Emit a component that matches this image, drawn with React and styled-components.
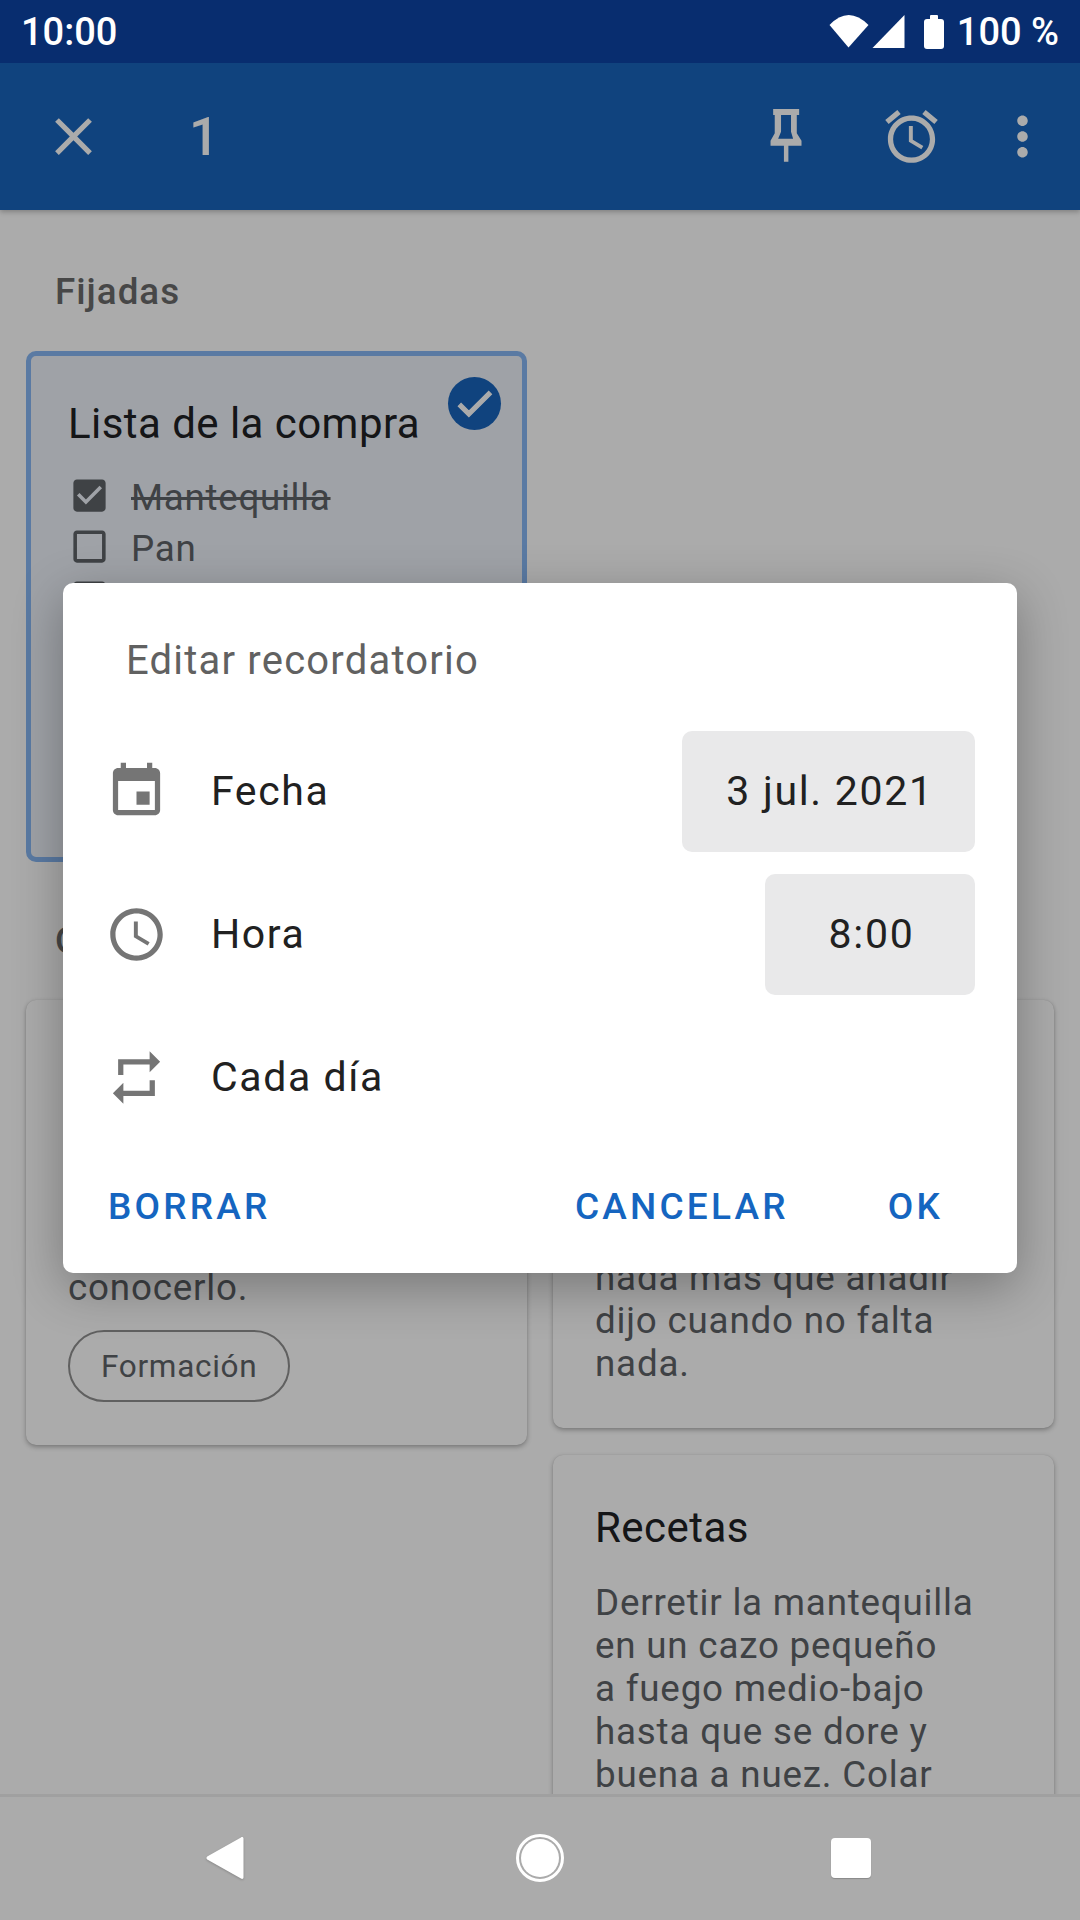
import React from "react";
import styled, { createGlobalStyle } from "styled-components";

const GlobalStyle = createGlobalStyle`
  html, body {
    margin: 0;
    padding: 0;
    background: #fff;
  }
  * {
    box-sizing: border-box;
  }
`;

const ICONS = {
  close:
    "M19 6.41L17.59 5 12 10.59 6.41 5 5 6.41 10.59 12 5 17.59 6.41 19 12 13.41 17.59 19 19 17.59 13.41 12z",
  pin: "M7.3 1.5H17.2V3.8H16.3V10.8L18.1 13.6V15.5H13.1V21.6H11.4V15.5H6.3V13.6L7.9 10.8V3.8H7.3ZM10.3 3.8V10.2L9.2 12.9H14.9L14.1 10.2V3.8Z",
  alarm:
    "M22 5.72l-4.6-3.86-1.29 1.53 4.6 3.86L22 5.72zM7.88 3.39L6.6 1.86 2 5.71l1.29 1.53 4.59-3.85zM12.5 8H11v6l4.75 2.85.75-1.23-4-2.37V8zM12 4c-4.97 0-9 4.03-9 9s4.03 9 9 9 9-4.03 9-9-4.03-9-9-9zm0 16c-3.87 0-7-3.13-7-7s3.13-7 7-7 7 3.13 7 7-3.13 7-7 7z",
  more:
    "M12 8c1.1 0 2-.9 2-2s-.9-2-2-2-2 .9-2 2 .9 2 2 2zm0 2c-1.1 0-2 .9-2 2s.9 2 2 2 2-.9 2-2-.9-2-2-2zm0 6c-1.1 0-2 .9-2 2s.9 2 2 2 2-.9 2-2-.9-2-2-2z",
  event:
    "M17 12h-5v5h5v-5zM16 1v2H8V1H6v2H5c-1.11 0-1.99.9-1.99 2L3 19c0 1.1.89 2 2 2h14c1.1 0 2-.9 2-2V5c0-1.1-.9-2-2-2h-1V1h-2zm3 18H5V8h14v11z",
  schedule:
    "M11.99 2C6.47 2 2 6.48 2 12s4.47 10 9.99 10C17.52 22 22 17.52 22 12S17.52 2 11.99 2zM12 20c-4.42 0-8-3.58-8-8s3.58-8 8-8 8 3.58 8 8-3.58 8-8 8zM12.5 7H11v6l5.25 3.15.75-1.23-4.5-2.67z",
  repeat: "M7 7h10v3l4-4-4-4v3H5v6h2V7zm10 10H7v-3l-4 4 4 4v-3h12v-6h-2v4z",
  check: "M9 16.17L4.83 12l-1.42 1.41L9 19 21 7l-1.41-1.41z",
  checked:
    "M19 3H5c-1.11 0-2 .9-2 2v14c0 1.1.89 2 2 2h14c1.1 0 2-.9 2-2V5c0-1.1-.9-2-2-2zm-9 14l-5-5 1.41-1.41L10 14.17l7.59-7.59L19 8l-9 9z",
  unchecked:
    "M19 5v14H5V5h14m0-2H5c-1.1 0-2 .9-2 2v14c0 1.1.9 2 2 2h14c1.1 0 2-.9 2-2V5c0-1.1-.9-2-2-2z",
};

function Icon({ name, size = 63, color = "currentColor", bold = 0 }) {
  return (
    <svg
      width={size}
      height={size}
      viewBox="0 0 24 24"
      fill={color}
      stroke={bold ? color : "none"}
      strokeWidth={bold}
      style={{ display: "block", flexShrink: 0 }}
    >
      <path d={ICONS[name]} />
    </svg>
  );
}

const RECIPE_LINES = [
  "Derretir la mantequilla",
  "en un cazo pequeño",
  "a fuego medio-bajo",
  "hasta que se dore y",
  "buena a nuez. Colar",
];

function App() {
  return (
    <Screen>
      <GlobalStyle />
      <StatusBar>
        <StatusTime>10:00</StatusTime>
        <StatusIcons>
          <svg width="40" height="33" viewBox="0 0 40 33" fill="#fff">
            <path d="M19.5 32.5L0.5 10Q19.5 -10 39.5 10z" />
          </svg>
          <svg width="33" height="33" viewBox="0 0 33 33" fill="#fff">
            <path d="M32.5 0V33H0.5z" />
          </svg>
          <Battery />
          <StatusPercent>100 %</StatusPercent>
        </StatusIcons>
      </StatusBar>

      <Body>
        <AppBar>
          <CloseSlot>
            <Icon name="close" />
          </CloseSlot>
          <Count>1</Count>
          <Spacer />
          <ActionSlot width={126}>
            <Icon name="pin" />
          </ActionSlot>
          <ActionSlot width={126}>
            <Icon name="alarm" />
          </ActionSlot>
          <ActionSlot width={96}>
            <Icon name="more" />
          </ActionSlot>
        </AppBar>

        <Content>
          <SectionTitle>Fijadas</SectionTitle>
          <PinnedRow>
            <PinnedCard>
              <SelectedBadge>
                <Icon name="check" size={45} color="#fff" bold={0.7} />
              </SelectedBadge>
              <CardTitle>Lista de la compra</CardTitle>
              <CheckRow>
                <Icon name="checked" size={43} color="#5f6368" />
                <CheckLabel done>Mantequilla</CheckLabel>
              </CheckRow>
              <CheckRow>
                <Icon name="unchecked" size={43} color="#5f6368" />
                <CheckLabel>Pan</CheckLabel>
              </CheckRow>
              <CheckRow>
                <Icon name="unchecked" size={43} color="#5f6368" />
              </CheckRow>
            </PinnedCard>
          </PinnedRow>

          <SectionTitle>Otras</SectionTitle>
          <Columns>
            <Column>
              <NoteCard height={445} bottom>
                <NoteLine>conocerlo.</NoteLine>
                <Tag>Formación</Tag>
              </NoteCard>
            </Column>
            <Column>
              <NoteCard height={428} bottom>
                <NoteLine>nada más que añadir</NoteLine>
                <NoteLine>dijo cuando no falta</NoteLine>
                <NoteLine>nada.</NoteLine>
              </NoteCard>
              <NoteCard height={420}>
                <RecipeTitle>Recetas</RecipeTitle>
                {RECIPE_LINES.map((line) => (
                  <NoteLine key={line}>{line}</NoteLine>
                ))}
              </NoteCard>
            </Column>
          </Columns>
        </Content>

        <Scrim>
          <Dialog>
            <DialogTitle>Editar recordatorio</DialogTitle>
            <DialogRow>
              <RowIcon>
                <Icon name="event" color="#757575" />
              </RowIcon>
              <RowLabel>Fecha</RowLabel>
              <ValueChip width={293}>3 jul. 2021</ValueChip>
            </DialogRow>
            <DialogRow>
              <RowIcon>
                <Icon name="schedule" color="#757575" />
              </RowIcon>
              <RowLabel>Hora</RowLabel>
              <ValueChip width={210}>8:00</ValueChip>
            </DialogRow>
            <DialogRow>
              <RowIcon>
                <Icon name="repeat" color="#757575" />
              </RowIcon>
              <RowLabel>Cada día</RowLabel>
            </DialogRow>
            <DialogActions>
              <DialogButton>BORRAR</DialogButton>
              <Spacer />
              <DialogButton>CANCELAR</DialogButton>
              <DialogButton>OK</DialogButton>
            </DialogActions>
          </Dialog>
        </Scrim>
      </Body>

      <NavBar>
        <NavSlot width={126}>
          <svg width="38" height="44" viewBox="0 0 38 44" fill="#fff" style={{ filter: "drop-shadow(0 1px 1px rgba(0,0,0,0.2))" }}>
            <path d="M35 1.5c1.2-.9 2.5-.2 2.5 1.2v38.6c0 1.4-1.3 2.1-2.5 1.2L1.2 23.6c-1-.8-1-2.4 0-3.2z" />
          </svg>
        </NavSlot>
        <NavSlot width={126}>
          <HomeRing>
            <HomeDot />
          </HomeRing>
        </NavSlot>
        <NavSlot width={118}>
          <RecentSquare />
        </NavSlot>
      </NavBar>
    </Screen>
  );
}

export default App;

const Screen = styled.div`
  width: 1080px;
  height: 1920px;
  display: flex;
  flex-direction: column;
  overflow: hidden;
  font-family: Roboto, "Liberation Sans", sans-serif;
  background: #fff;
`;
const StatusBar = styled.div`
  height: 63px;
  flex-shrink: 0;
  background: #082d6f;
  color: #fff;
  display: flex;
  align-items: center;
  justify-content: space-between;
  padding: 0 21px;
`;
const StatusTime = styled.div`
  font-size: 38px;
  font-weight: 500;
`;
const StatusIcons = styled.div`
  display: flex;
  align-items: center;
  gap: 3px;
`;
const Battery = styled.div`
  width: 20px;
  height: 30px;
  margin: 4px 10px 0 16px;
  background: #fff;
  border-radius: 3px;
  position: relative;
  &::before {
    content: "";
    position: absolute;
    top: -4px;
    left: 6px;
    width: 8px;
    height: 4px;
    background: #fff;
    border-radius: 1px 1px 0 0;
  }
`;
const StatusPercent = styled.div`
  font-size: 38px;
  font-weight: 500;
`;
const Body = styled.div`
  flex: 1;
  min-height: 0;
  position: relative;
  overflow: hidden;
  display: flex;
  flex-direction: column;
`;
const AppBar = styled.div`
  height: 147px;
  flex-shrink: 0;
  background: #1865bd;
  color: #fff;
  display: flex;
  align-items: center;
  padding: 0 10px 0 42px;
  box-shadow: 0 2px 5px rgba(0, 0, 0, 0.25);
  position: relative;
`;
const CloseSlot = styled.div`
  width: 63px;
  display: flex;
  justify-content: center;
`;
const Count = styled.div`
  margin-left: 84px;
  font-size: 53px;
  font-weight: 500;
`;
const Spacer = styled.div`
  flex: 1;
`;
const ActionSlot = styled.div`
  width: ${(props) => props.width}px;
  display: flex;
  justify-content: center;
`;
const Content = styled.div`
  flex: 1;
  min-height: 0;
  overflow: hidden;
  padding: 62px 26px 0;
`;
const SectionTitle = styled.div`
  height: 43px;
  line-height: 40px;
  margin: 0 0 36px 29px;
  font-size: 36.75px;
  font-weight: 500;
  letter-spacing: 1px;
  color: #6b6b6b;
`;
const PinnedRow = styled.div`
  width: 501px;
  margin-bottom: 59px;
`;
const PinnedCard = styled.div`
  position: relative;
  height: 511px;
  overflow: hidden;
  padding: 43px 37px 0;
  background: #edf2f9;
  border: 5px solid #87b7f3;
  border-radius: 10px;
`;
const SelectedBadge = styled.div`
  position: absolute;
  top: 21px;
  right: 21px;
  width: 53px;
  height: 53px;
  border-radius: 50%;
  background: #1865bd;
  display: flex;
  align-items: center;
  justify-content: center;
`;
const CardTitle = styled.div`
  height: 50px;
  line-height: 50px;
  margin-bottom: 21px;
  font-size: 42px;
  letter-spacing: 0.45px;
  color: #202124;
`;
const CheckRow = styled.div`
  height: 51px;
  display: flex;
  align-items: center;
  gap: 20px;
`;
const CheckLabel = styled.div`
  margin-top: 4px;
  font-size: 36.75px;
  letter-spacing: 0.7px;
  color: #5f6368;
  text-decoration: ${(props) => (props.done ? "line-through" : "none")};
`;
const Columns = styled.div`
  display: flex;
  gap: 26px;
`;
const Column = styled.div`
  flex: 1;
  min-width: 0;
  display: flex;
  flex-direction: column;
  gap: 27px;
`;
const NoteCard = styled.div`
  height: ${(props) => props.height}px;
  flex-shrink: 0;
  display: flex;
  flex-direction: column;
  justify-content: ${(props) => (props.bottom ? "flex-end" : "flex-start")};
  align-items: flex-start;
  padding: ${(props) => (props.bottom ? "0 42px 43px" : "48px 42px 0")};
  background: #fff;
  border-radius: 10px;
  box-shadow: 0 2px 5px rgba(0, 0, 0, 0.3), 0 0 1px rgba(0, 0, 0, 0.15);
`;
const NoteLine = styled.div`
  height: 43px;
  line-height: 43px;
  font-size: 36.75px;
  letter-spacing: 0.8px;
  white-space: nowrap;
  color: #5f6368;
`;
const RecipeTitle = styled.div`
  height: 50px;
  line-height: 50px;
  margin-bottom: 28px;
  font-size: 42px;
  letter-spacing: 0.45px;
  color: #202124;
`;
const Tag = styled.div`
  margin-top: 21px;
  height: 72px;
  padding: 0 31px;
  display: flex;
  align-items: center;
  font-size: 31.5px;
  letter-spacing: 0.7px;
  color: #5f6368;
  border: 2px solid #8f8f8f;
  border-radius: 36px;
`;
const Scrim = styled.div`
  position: absolute;
  inset: 0;
  padding-bottom: 2px;
  background: rgba(0, 0, 0, 0.33);
  display: flex;
  align-items: center;
  justify-content: center;
`;
const Dialog = styled.div`
  width: 954px;
  padding: 53px 0 45px;
  background: #fff;
  border-radius: 10px;
  box-shadow: 0 14px 50px rgba(0, 0, 0, 0.3);
`;
const DialogTitle = styled.div`
  height: 50px;
  line-height: 50px;
  margin: 0 0 45px 63px;
  font-size: 40px;
  letter-spacing: 1.2px;
  color: #616161;
`;
const DialogRow = styled.div`
  height: 121px;
  margin-bottom: 22px;
  padding: 0 42px;
  display: flex;
  align-items: center;
`;
const RowIcon = styled.div`
  width: 63px;
  margin-right: 43px;
`;
const RowLabel = styled.div`
  flex: 1;
  font-size: 41px;
  letter-spacing: 1.6px;
  color: #212121;
`;
const ValueChip = styled.div`
  width: ${(props) => props.width}px;
  height: 121px;
  padding-left: 3px;
  display: flex;
  align-items: center;
  justify-content: center;
  font-size: 41px;
  letter-spacing: 1.7px;
  color: #212121;
  background: #e9e9ea;
  border-radius: 10px;
`;
const DialogActions = styled.div`
  height: 43px;
  margin-top: 47px;
  padding: 0 74px 0 45px;
  display: flex;
  align-items: center;
  gap: 99px;
`;
const DialogButton = styled.div`
  font-size: 37px;
  font-weight: 500;
  letter-spacing: 3.2px;
  color: #1565c0;
`;
const NavBar = styled.div`
  height: 126px;
  flex-shrink: 0;
  padding: 0 0 2px 162px;
  background: #ababab;
  border-top: 3px solid #a0a0a0;
  display: flex;
  align-items: center;
  gap: 189px;
`;
const NavSlot = styled.div`
  width: ${(props) => props.width}px;
  display: flex;
  justify-content: center;
`;
const HomeRing = styled.div`
  width: 48px;
  height: 48px;
  border: 3px solid #fff;
  border-radius: 50%;
  padding: 2px;
`;
const HomeDot = styled.div`
  width: 100%;
  height: 100%;
  border-radius: 50%;
  background: #fff;
`;
const RecentSquare = styled.div`
  width: 40px;
  height: 40px;
  border-radius: 4px;
  background: #fff;
  box-shadow: 0 1px 1px rgba(0, 0, 0, 0.2);
`;
